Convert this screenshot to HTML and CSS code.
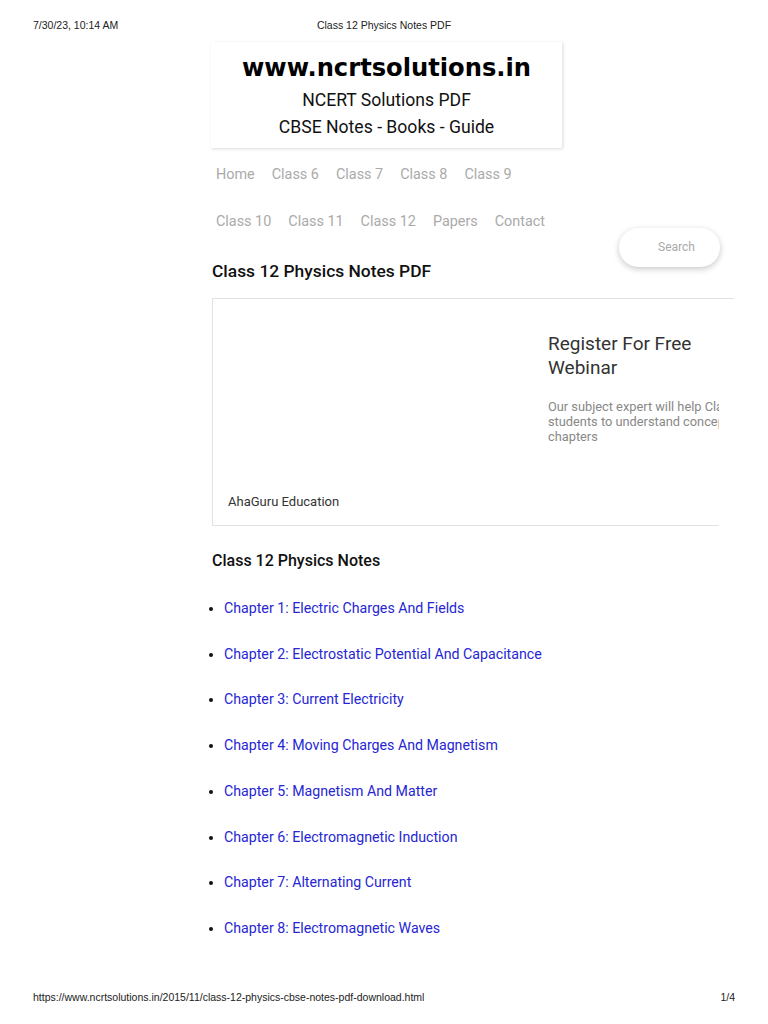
FILE: index.html
```
<!DOCTYPE html>
<html lang="en">
<head>
    <meta charset="UTF-8">
    <meta name="viewport" content="width=device-width, initial-scale=1.0">
    <title>Class 12 Physics Notes PDF</title>
    <link rel="stylesheet" href="styles.css">
</head>
<body>
    <div class="print-head">
        <span>7/30/23, 10:14 AM</span>
        <span class="print-title">Class 12 Physics Notes PDF</span>
        <span></span>
    </div>

    <div class="page">
        <div class="site-header">
            <div class="logo">www.ncrtsolutions.in</div>
            <div class="tagline">NCERT Solutions PDF</div>
            <div class="tagline">CBSE Notes - Books - Guide</div>
        </div>

        <div class="search">Search</div>

        <ul class="nav">
            <li><a href="#">Home</a></li>
            <li><a href="#">Class 6</a></li>
            <li><a href="#">Class 7</a></li>
            <li><a href="#">Class 8</a></li>
            <li><a href="#">Class 9</a></li>
            <li><a href="#">Class 10</a></li>
            <li><a href="#">Class 11</a></li>
            <li><a href="#">Class 12</a></li>
            <li><a href="#">Papers</a></li>
            <li><a href="#">Contact</a></li>
        </ul>

        <h1 class="post-title">Class 12 Physics Notes PDF</h1>

        <div class="ad">
            <div class="ad-inner">
                <div class="ad-left">
                    <div class="ad-brand">AhaGuru Education</div>
                </div>
                <div class="ad-right">
                    <div class="ad-title">Register For Free Webinar</div>
                    <div class="ad-text">Our subject expert will help Class 12 students to understand concepts of chapters</div>
                </div>
            </div>
        </div>

        <h2 class="section-title">Class 12 Physics Notes</h2>

        <ul class="chapters">
            <li><a href="#">Chapter 1: Electric Charges And Fields</a></li>
            <li><a href="#">Chapter 2: Electrostatic Potential And Capacitance</a></li>
            <li><a href="#">Chapter 3: Current Electricity</a></li>
            <li><a href="#">Chapter 4: Moving Charges And Magnetism</a></li>
            <li><a href="#">Chapter 5: Magnetism And Matter</a></li>
            <li><a href="#">Chapter 6: Electromagnetic Induction</a></li>
            <li><a href="#">Chapter 7: Alternating Current</a></li>
            <li><a href="#">Chapter 8: Electromagnetic Waves</a></li>
        </ul>
    </div>

    <div class="print-foot">
        <span>https://www.ncrtsolutions.in/2015/11/class-12-physics-cbse-notes-pdf-download.html</span>
        <span>1/4</span>
    </div>
</body>
</html>
```

FILE: styles.css
```
body {
    margin: 0;
    min-height: 1024px;
    display: flex;
    flex-direction: column;
    font-family: Roboto, "Liberation Sans", sans-serif;
    color: #111;
    background: #fff;
}
a {
    text-decoration: none;
}
.print-head,
.print-foot {
    font-family: "Liberation Sans", Arial, sans-serif;
    font-size: 10.5px;
    line-height: 12px;
    color: #222;
    padding: 0 33px;
}
.print-head {
    display: grid;
    grid-template-columns: 1fr auto 1fr;
    padding-top: 19px;
    height: 42px;
    box-sizing: border-box;
}
.print-foot {
    margin-top: auto;
    display: flex;
    justify-content: space-between;
    padding-bottom: 21px;
}
.page {
    margin-left: 211px;
    width: 523px;
}
.site-header {
    width: 351px;
    height: 106px;
    box-sizing: border-box;
    padding-top: 10px;
    text-align: center;
    box-shadow: 1px 1px 3px rgba(0,0,0,0.15);
}
.logo {
    font-family: "DejaVu Sans", sans-serif;
    font-weight: bold;
    font-size: 24.2px;
    line-height: 32px;
    color: #000;
    margin-bottom: 2.5px;
}
.tagline {
    font-size: 17.6px;
    line-height: 27px;
    color: #111;
}
.search {
    float: right;
    margin: 80px 14px 0 0;
    width: 101px;
    height: 39px;
    line-height: 39px;
    border-radius: 20px;
    box-shadow: 0 2px 6px rgba(0,0,0,0.22);
    color: #aaa;
    font-size: 12px;
    text-align: center;
    box-sizing: border-box;
    padding-left: 14px;
}
.nav {
    list-style: none;
    margin: 2.5px 0 0;
    padding: 0 0 0 5px;
    width: 346px;
    display: flex;
    flex-wrap: wrap;
    column-gap: 17px;
    font-size: 14.4px;
    line-height: 47px;
}
.nav a {
    color: #aaa;
}
.post-title {
    font-size: 17.4px;
    font-weight: 500;
    line-height: 24px;
    margin: 14.5px 0 15px 1px;
}
.ad {
    width: 522px;
    margin-left: 1px;
    border-top: 1px solid #e2e2e2;
}
.ad-inner {
    width: 507px;
    height: 227px;
    box-sizing: border-box;
    border-left: 1px solid #e2e2e2;
    border-bottom: 1px solid #e2e2e2;
    display: flex;
    overflow: hidden;
}
.ad-left {
    width: 335px;
    flex-shrink: 0;
    display: flex;
    align-items: flex-end;
    padding: 0 0 16px 15px;
    box-sizing: border-box;
}
.ad-brand {
    font-size: 13px;
    color: #333;
}
.ad-right {
    width: 245px;
    flex-shrink: 0;
    padding-top: 33px;
}
.ad-title {
    font-size: 19px;
    line-height: 24px;
    color: #333;
    width: 170px;
}
.ad-text {
    margin-top: 19px;
    font-size: 12.8px;
    line-height: 15px;
    color: #888;
}
.section-title {
    font-size: 16px;
    font-weight: 500;
    line-height: 22px;
    margin: 24px 0 14px 1px;
}
.chapters {
    margin: 0;
    padding-left: 13px;
    font-size: 14.2px;
    line-height: 45.7px;
}
.chapters a {
    color: #2626d4;
}
```
